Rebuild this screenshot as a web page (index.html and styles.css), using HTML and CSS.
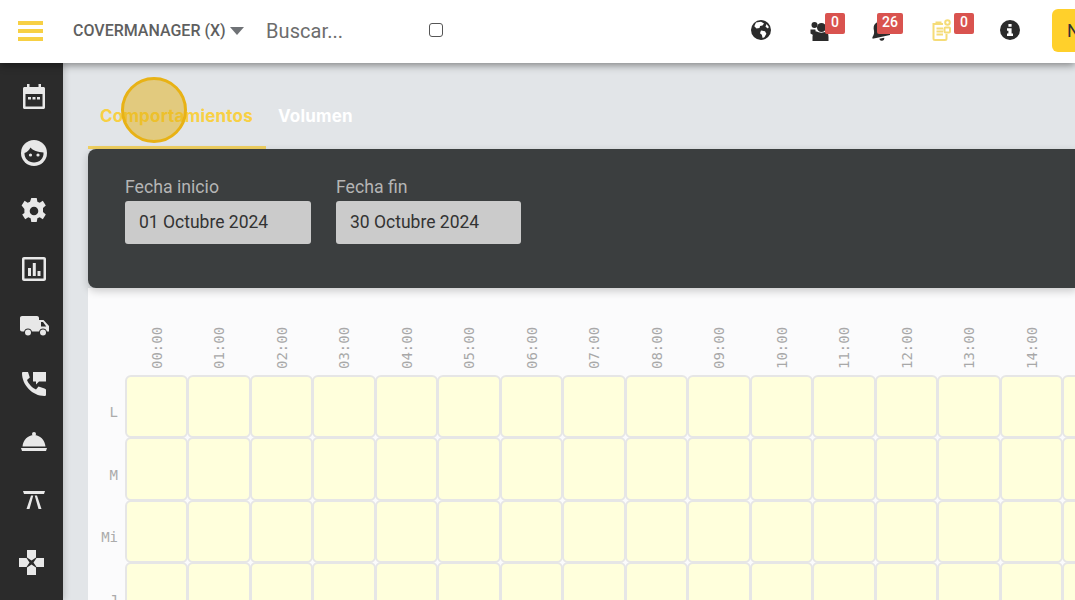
FILE: index.html
```html
<!DOCTYPE html>
<html lang="es">
<head>
<meta charset="utf-8">
<title>CoverManager</title>
<link rel="stylesheet" href="styles.css">
</head>
<body>
<header class="topbar">
  <div class="burger"><span></span><span></span><span></span></div>
  <div class="brand">COVERMANAGER (X)</div>
  <div class="caret"></div>
  <div class="search">Buscar...</div>
  <div class="check"></div>
  <div class="actions">
    <div class="act act-globe"><svg width="22" height="22" viewBox="0 0 22 22"><circle cx="11" cy="11" r="10" fill="#2b2b2b"/><path d="M6 3.500 11 2.800l3 1.600-1.500 2.200-2.400.4-.6 2-3 .6-2.200-2.400zM11 11.500l4 .8 1.400 2.400-2 3.600-1.800.8-.8-3.400-1.800-1.400zM16.500 5l2.400 3-1 1.400-2.400-1.600z" fill="#fff"/></svg></div>
    <div class="act act-users"><svg width="20" height="20" viewBox="0 0 20 20"><circle cx="4.500" cy="4" r="3" fill="#2b2b2b"/><circle cx="11.500" cy="6.500" r="4.500" fill="#2b2b2b"/><path d="M.5 8.500h4.800L6 11.500 3 14 .5 12.500z" fill="#2b2b2b"/><path d="M2.500 20v-4c0-3.500 2.500-5.500 4.500-5.500 1.500 1.500 7 1.500 9 0 1.500 0 2.500 2 2.500 5.500v4z" fill="#2b2b2b"/></svg><b class="badge">0</b></div>
    <div class="act act-bell"><svg width="20" height="22" viewBox="0 0 20 22"><g transform="rotate(-12 10 11)"><path d="M10 1.500c1 0 1.500.7 1.500 1.500 3 .8 4.500 3.400 4.500 6.500 0 4 1.500 5.500 3 7v1.500H1V16.500c1.500-1.500 3-3 3-7 0-3.100 1.500-5.700 4.500-6.500 0-.8.500-1.500 1.500-1.500zM7.500 19.500h5a2.500 2.500 0 0 1-5 0z" fill="#2b2b2b"/></g></svg><b class="badge badge-wide">26</b></div>
    <div class="act act-list"><svg width="20" height="22" viewBox="0 0 20 22" fill="none" stroke="#f5dc78" stroke-width="2"><path d="M11 5H1.500v14.500c0 1 .5 1.500 1.500 1.500h10c1 0 1.500-.5 1.500-1.500V15"/><path d="M4.500 5.500V3.500h4v2M4.500 9.500h6.500M4.500 12.500h6.500M4.500 15.500h6.500"/><circle cx="15.500" cy="3.500" r="2.300"/><rect x="12.500" y="8.500" width="5.500" height="5" rx="1"/></svg><b class="badge">0</b></div>
    <div class="act act-info"><svg width="20" height="20" viewBox="0 0 20 20"><circle cx="10" cy="10" r="10" fill="#2b2b2b"/><rect x="8.400" y="4" width="3.200" height="2.800" rx=".5" fill="#fff"/><path d="M7 8.300h4.600v5.300H13V16H7v-2.400h1.400v-2.900H7z" fill="#fff"/></svg></div>
  </div>
  <div class="newbtn">N</div>
</header>

<div class="layout">
  <nav class="sidebar">
    <svg class="ico" width="24" height="26" viewBox="0 0 24 26"><path d="M5 1h2.500v3H16.500V1H19v3h2.500c.8 0 1.500.7 1.500 1.500v19c0 .8-.7 1.500-1.500 1.500h-19C1.700 26 1 25.300 1 24.500v-19C1 4.700 1.700 4 2.500 4H5zM3.500 11v12.500h17V11z" fill="#e8e8e8" fill-rule="evenodd"/><path d="M6 14h3v2.500H6zM10.500 14h3v2.500h-3zM15 14h3v2.500h-3z" fill="#e8e8e8"/></svg>
    <svg class="ico" width="26" height="26" viewBox="0 0 26 26"><circle cx="13" cy="13" r="13" fill="#e8e8e8"/><path d="M3.500 13C6 12 8 10.500 9.500 7.500 11.500 10.500 17 12 22.500 12.500 23 18.500 18.500 22.500 13 22.500S3.200 18.500 3.500 13z" fill="#2b2b2b"/><circle cx="9.500" cy="15" r="1.600" fill="#e8e8e8"/><circle cx="17" cy="15" r="1.600" fill="#e8e8e8"/></svg>
    <svg class="ico" width="26" height="26" viewBox="0 0 26 26"><path d="M10.300 0h5.400l.7 3.700 2.300 1 3.100-2 3 4.800-2.800 2.500v3.900l2.800 2.500-3 4.800-3.100-2-2.300 1-.7 3.800h-5.400l-.7-3.800-2.300-1-3.100 2-3-4.800L3.400 15v-3.900L.6 7.500l3-4.800 3.100 2 2.300-1zM13 8.700a4.300 4.300 0 1 0 0 8.600 4.300 4.300 0 0 0 0-8.600z" fill="#e8e8e8" fill-rule="evenodd"/></svg>
    <svg class="ico" width="24" height="24" viewBox="0 0 24 24"><path d="M2 0h20c1.100 0 2 .9 2 2v20c0 1.100-.9 2-2 2H2c-1.100 0-2-.9-2-2V2C0 .9.900 0 2 0zM2.500 2.500v19h19v-19z" fill="#e8e8e8" fill-rule="evenodd"/><path d="M6 11h3v8H6zM10.800 6h3v13h-3zM15.500 14h3v5h-3z" fill="#e8e8e8"/></svg>
    <svg class="ico" width="29" height="20" viewBox="0 0 29 20"><path d="M2 0h15c1.100 0 2 .9 2 2v2h4.500L29 10v5.500h-2.100a4 4 0 0 0-7.800 0h-7.200a4 4 0 0 0-7.800 0H2c-1.100 0-2-.9-2-2V2C0 .9.900 0 2 0zM21 6v4.500h5.300L23 6z" fill="#e8e8e8" fill-rule="evenodd"/><circle cx="8" cy="16.500" r="3" fill="#e8e8e8"/><circle cx="23" cy="16.500" r="3" fill="#e8e8e8"/></svg>
    <svg class="ico" width="24" height="24" viewBox="0 0 24 24"><path d="M1 0h5l1.800 5.500-2.800 2.500c1.500 4 5.500 8 9 9.500l2.500-3L22.500 16.500 24 17.500v5c0 1-.7 1.500-1.500 1.500C10.500 24 0 13 0 1c0-.5.500-1 1-1z" fill="#e8e8e8"/><path d="M11 0h13v9.500h-7l-3 3V9.500h-3z" fill="#e8e8e8"/></svg>
    <svg class="ico" width="26" height="19" viewBox="0 0 26 19"><circle cx="13" cy="2" r="2" fill="#e8e8e8"/><path d="M1.500 14.500C2 8 7 3 13 3s11 5 11.500 11.500zM0 16h26l-1 3H1z" fill="#e8e8e8"/></svg>
    <svg class="ico" width="22" height="18" viewBox="0 0 22 18"><path d="M0 0h22l-1 3H1z" fill="#e8e8e8"/><path d="M8 4.500h2.300L6.500 18H3.500zM14 4.500h-2.300l3.800 13.500h3z" fill="#e8e8e8"/></svg>
    <svg class="ico" width="25" height="25" viewBox="0 0 25 25"><path d="M8 0h9v7.500l-4.500 3-4.500-3zM8 25h9v-7.500l-4.500-3-4.500 3zM0 8v9h7.500l3-4.500-3-4.500zM25 8v9h-7.500l-3-4.500 3-4.500z" fill="#e8e8e8"/></svg>
  </nav>
  <main class="main">
    <div class="tabs">
      <div class="tab tab-on">Comportamientos</div>
      <div class="tab">Volumen</div>
    </div>
    <section class="filter">
      <div class="field"><label class="flabel">Fecha inicio</label><div class="finput">01 Octubre 2024</div></div>
      <div class="field field-2"><label class="flabel">Fecha fin</label><div class="finput">30 Octubre 2024</div></div>
    </section>
    <section class="chart">
      <div class="hours">
        <span>00:00</span><span>01:00</span><span>02:00</span><span>03:00</span><span>04:00</span><span>05:00</span><span>06:00</span><span>07:00</span><span>08:00</span><span>09:00</span><span>10:00</span><span>11:00</span><span>12:00</span><span>13:00</span><span>14:00</span><span></span>
      </div>
      <div class="row"><div class="day">L</div><i></i><i></i><i></i><i></i><i></i><i></i><i></i><i></i><i></i><i></i><i></i><i></i><i></i><i></i><i></i><i></i></div>
      <div class="row"><div class="day">M</div><i></i><i></i><i></i><i></i><i></i><i></i><i></i><i></i><i></i><i></i><i></i><i></i><i></i><i></i><i></i><i></i></div>
      <div class="row"><div class="day">Mi</div><i></i><i></i><i></i><i></i><i></i><i></i><i></i><i></i><i></i><i></i><i></i><i></i><i></i><i></i><i></i><i></i></div>
      <div class="row"><div class="day">J</div><i></i><i></i><i></i><i></i><i></i><i></i><i></i><i></i><i></i><i></i><i></i><i></i><i></i><i></i><i></i><i></i></div>
    </section>
  </main>
</div>
<div class="click-mark"></div>
</body>
</html>
```
FILE: styles.css
```css
* { box-sizing: border-box; }
html, body { margin: 0; height: 600px; width: 1075px; overflow: hidden; }
body { font-family: Roboto, sans-serif; background: #e2e5e8; }

.topbar { height: 63px; background: #fff; display: flex; align-items: center; position: relative; z-index: 2; box-shadow: 0 2px 8px rgba(0,0,0,.45); overflow: hidden; }
.burger { width: 25px; margin-left: 18px; margin-top: -1px; display: flex; flex-direction: column; gap: 4px; }
.burger span { height: 4px; background: #f7d044; }
.brand { margin-left: 30px; margin-bottom: 2px; font-size: 16px; font-weight: 500; color: #5f5f5f; white-space: nowrap; width: 153px; }
.caret { width: 0; height: 0; margin-left: 4px; margin-bottom: 1px; border-left: 7px solid transparent; border-right: 7px solid transparent; border-top: 8px solid #6f7276; }
.search { margin-left: 22px; margin-bottom: 2px; font-size: 20px; letter-spacing: .07px; color: #6d6d6d; width: 163px; }
.check { width: 14px; height: 14px; margin-bottom: 3px; border: 1px solid #555; border-radius: 3px; background: #fff; }
.actions { position: absolute; top: 0; left: 0; }
.act { position: absolute; top: 19px; }
.act-globe { left: 750px; }
.act-users { left: 810px; top: 21px; }
.act-bell { left: 870px; }
.act-list { left: 932px; }
.act-info { left: 1000px; top: 20px; }
.act svg { display: block; }
.badge { position: absolute; top: -6px; left: 15px; min-width: 20px; height: 21px; padding: 0 3px; border-radius: 2px; background: #d9534f; color: #fff; font: 500 14px/18px Roboto, sans-serif; text-align: center; }
.badge-wide { left: 7px; min-width: 26px; }
.act-list .badge { left: 22px; }
.act-users .badge { left: 15px; top: -8px; }
.newbtn { position: absolute; left: 1052px; top: 9px; width: 70px; height: 43px; background: #ffd02b; border-radius: 6px; font-size: 18px; line-height: 43px; padding-left: 15px; color: #333; }

.layout { display: flex; height: 537px; }
.sidebar { width: 63px; flex: none; background: #2b2b2b; display: flex; flex-direction: column; align-items: center; padding-left: 5px; box-shadow: 2px 0 6px rgba(0,0,0,.15); position: relative; }
.ico { flex: none; display: block; }
.ico:nth-child(1) { margin-top: 20px; }
.ico:nth-child(2) { margin-top: 31px; }
.ico:nth-child(3) { margin-top: 32px; }
.ico:nth-child(4) { margin-top: 33px; }
.ico:nth-child(5) { margin-top: 35px; }
.ico:nth-child(6) { margin-top: 36px; }
.ico:nth-child(7) { margin-top: 36px; }
.ico:nth-child(8) { margin-top: 40px; }
.ico:nth-child(9) { margin-top: 41px; margin-left: -5px; }

.main { flex: 1; min-width: 0; padding-left: 25px; overflow: hidden; }
.tabs { display: flex; height: 86px; padding-top: 36px; }
.tab { height: 50px; font: 700 17px/35px Inter, sans-serif; color: #fff; padding: 0 12px; letter-spacing: .2px; }
.tab-on { color: #f8d044; border-bottom: 3px solid #f0d060; width: 178px; white-space: nowrap; }

.filter { height: 139px; background: #3b3e3f; border-radius: 8px 0 0 8px; box-shadow: 0 3px 8px rgba(0,0,0,.2); padding: 28px 0 0 37px; display: flex; position: relative; margin-right: -2px; }
.field { width: 186px; }
.field-2 { margin-left: 25px; width: 185px; }
.flabel { display: block; font-size: 17.7px; line-height: 20px; color: #b5b5b5; margin-bottom: 4px; }
.finput { height: 43px; background: #cbcbcb; border-radius: 3px; font-size: 17.5px; line-height: 42px; color: #333; padding-left: 14px; white-space: nowrap; }

.chart { background: #fbfbfc; height: 312px; padding-left: 37px; width: 1000px; }
.hours { display: flex; height: 87px; margin-left: .5px; }
.hours span { width: 62.5px; flex: none; height: 81px; font: 14px/62.5px "DejaVu Sans Mono", monospace; color: #a8a8a8; writing-mode: vertical-rl; transform: rotate(180deg); text-align: left; }
.row { display: flex; height: 62.5px; position: relative; }
.row i { flex: none; width: 63.5px; height: 63.5px; margin: -.5px; background: #ffffdc; border: 2px solid #e6e6e6; border-radius: 6px; }
.row i:nth-child(2) { margin-left: 0; width: 63px; }
.day { position: absolute; left: -37px; width: 30px; top: 30px; text-align: right; font: 14px/1 "DejaVu Sans Mono", monospace; color: #ababab; }

.click-mark { position: absolute; z-index: 3; left: 121px; top: 77px; width: 66px; height: 66px; border-radius: 50%; background: rgba(225,175,20,.5); border: 3px solid #e8b215; }
```
